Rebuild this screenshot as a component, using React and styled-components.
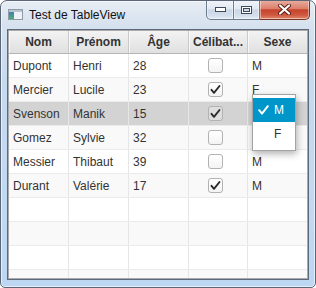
import React from 'react';
import styled, { createGlobalStyle } from 'styled-components';

const Global = createGlobalStyle`
  html, body { margin: 0; padding: 0; background: #ffffff; }
  body { font-family: "Liberation Sans", Arial, sans-serif; }
`;

const Window = styled.div`
  position: relative;
  box-sizing: border-box;
  width: 316px;
  height: 288px;
  border: 1px solid #5b6778;
  border-radius: 7px 7px 5px 5px;
  background: linear-gradient(to bottom, #e7edf4 0px, #d5e1ee 26px, #c6daf0 80px, #bdd7f3 100%);
  box-shadow: inset 0 0 0 1px rgba(255, 255, 255, 0.6);
  display: flex;
  flex-direction: column;
  overflow: hidden;
`;

const TitleBar = styled.div`
  height: 28px;
  flex: none;
  display: flex;
  align-items: flex-start;
  padding-left: 7px;
  padding-right: 5px;
`;

const AppIcon = styled.svg`
  margin-top: 8px;
  flex: none;
`;

const Title = styled.div`
  margin-top: 6px;
  margin-left: 6px;
  font-size: 12px;
  line-height: 16px;
  color: #111;
`;

const Controls = styled.div`
  margin-left: auto;
  margin-top: -1px;
  display: flex;
  height: 20px;
`;

const CtrlBtn = styled.div`
  box-sizing: border-box;
  width: ${(p) => p.$w}px;
  height: 20px;
  display: flex;
  align-items: center;
  justify-content: center;
  border: 1px solid ${(p) => (p.$close ? '#7d3326' : '#6c7b8e')};
  border-top: none;
  border-left: ${(p) => (p.$first ? '1px solid #6c7b8e' : 'none')};
  border-radius: ${(p) => (p.$first ? '0 0 0 5px' : p.$close ? '0 0 5px 0' : '0')};
  background: ${(p) =>
    p.$close
      ? 'linear-gradient(to bottom, #eab0a2 0%, #dc806b 45%, #c5432b 52%, #cf5a40 80%, #e08a6f 100%)'
      : 'linear-gradient(to bottom, #f1f5fa 0%, #e2e9f2 45%, #cad7e6 52%, #d3deeb 80%, #e2ebf5 100%)'};
  box-shadow: inset 0 0 0 1px rgba(255, 255, 255, 0.45);
`;

const Client = styled.div`
  flex: 1;
  margin: 0 6px 7px 6px;
  border: 1px solid #5d6a7b;
  background: #ffffff;
  display: flex;
  flex-direction: column;
  min-height: 0;
`;

const Table = styled.div`
  flex: 1;
  border: 1px solid #a9a9a9;
  display: flex;
  flex-direction: column;
  overflow: hidden;
  min-height: 0;
`;

const COLS = '60px 60px 60px 59px 59px';

const HeaderRow = styled.div`
  display: grid;
  grid-template-columns: ${COLS};
  height: 23px;
  box-sizing: border-box;
  border-bottom: 1px solid #b5b5b5;
  background: linear-gradient(to bottom, #f3f3f3 0%, #e9e9e9 50%, #e0e0e0 100%);
`;

const HeaderCell = styled.div`
  box-sizing: border-box;
  border-right: ${(p) => (p.$last ? 'none' : '1px solid #c9c9c9')};
  box-shadow: inset 1px 0 0 rgba(255, 255, 255, 0.7);
  display: flex;
  align-items: center;
  justify-content: center;
  font-size: 12px;
  font-weight: bold;
  color: #333;
  white-space: nowrap;
  overflow: hidden;
`;

const Body = styled.div`
  flex: 1;
  overflow: hidden;
`;

const Row = styled.div`
  display: grid;
  grid-template-columns: ${COLS};
  height: 24px;
  box-sizing: border-box;
  border-bottom: 1px solid #ebebeb;
  background: ${(p) => (p.$selected ? '#d3d3d3' : p.$odd ? '#f9f9f9' : '#ffffff')};
`;

const Cell = styled.div`
  box-sizing: border-box;
  border-right: ${(p) => (p.$last ? 'none' : '1px solid #e6e6e6')};
  display: flex;
  align-items: center;
  justify-content: ${(p) => (p.$center ? 'center' : 'flex-start')};
  padding: ${(p) => (p.$center ? '0 5px 0 0' : '0 3px 0 4px')};
  font-size: 12px;
  color: #333;
  white-space: nowrap;
  overflow: hidden;
`;

const Box = styled.span`
  box-sizing: border-box;
  width: 15px;
  height: 15px;
  border: 1px solid #b2b2b2;
  border-radius: 3px;
  background: ${(p) =>
    p.$dim ? 'rgba(255,255,255,0.25)' : 'linear-gradient(to bottom, #ffffff 0%, #f3f3f3 100%)'};
  display: flex;
  align-items: center;
  justify-content: center;
`;

const Popup = styled.div`
  position: absolute;
  left: 251px;
  top: 93px;
  width: 44px;
  box-sizing: border-box;
  border: 1px solid #a3a3a3;
  background: #ffffff;
  padding: 3px 0 4px 0;
  box-shadow: 1px 3px 7px rgba(0, 0, 0, 0.3);
`;

const MenuItem = styled.div`
  height: 24px;
  display: flex;
  align-items: center;
  padding-left: 5px;
  font-size: 12px;
  background: ${(p) => (p.$active ? '#0096c9' : 'transparent')};
  color: ${(p) => (p.$active ? '#ffffff' : '#333')};
`;

const CheckSlot = styled.span`
  width: 16px;
  display: flex;
  align-items: center;
`;

const CheckMark = () => (
  <svg width="13" height="13" viewBox="0 0 13 13">
    <path d="M2.5 6.8 L5 9.8 L10.5 3" fill="none" stroke="#2b2b2b" strokeWidth="1.9" strokeLinecap="round" strokeLinejoin="round" />
  </svg>
);

const CheckBox = ({ checked, dim }) => (
  <Box $dim={dim}>{checked && <CheckMark />}</Box>
);

const data = [
  { nom: 'Dupont', prenom: 'Henri', age: 28, celib: false, sexe: 'M' },
  { nom: 'Mercier', prenom: 'Lucile', age: 23, celib: true, sexe: 'F' },
  { nom: 'Svenson', prenom: 'Manik', age: 15, celib: true, sexe: 'M', selected: true },
  { nom: 'Gomez', prenom: 'Sylvie', age: 32, celib: false, sexe: 'F' },
  { nom: 'Messier', prenom: 'Thibaut', age: 39, celib: false, sexe: 'M' },
  { nom: 'Durant', prenom: 'Valérie', age: 17, celib: true, sexe: 'M' },
];

const headers = ['Nom', 'Prénom', 'Âge', 'Célibat...', 'Sexe'];

export default function App() {
  const empty = [6, 7, 8, 9];
  return (
    <>
      <Global />
      <Window>
        <TitleBar>
          <AppIcon width="15" height="11" viewBox="0 0 15 11">
            <defs>
              <linearGradient id="ig" x1="0" y1="0" x2="0" y2="1">
                <stop offset="0" stopColor="#3f7fb8" />
                <stop offset="1" stopColor="#4fae6e" />
              </linearGradient>
            </defs>
            <rect x="0.5" y="0.5" width="14" height="10" fill="#eef2f6" stroke="#8d9aa8" />
            <rect x="1" y="1" width="13" height="2" fill="#b9c4cf" />
            <rect x="1" y="3" width="5" height="7" fill="url(#ig)" />
          </AppIcon>
          <Title>Test de TableView</Title>
          <Controls>
            <CtrlBtn $w={28} $first>
              <svg width="11" height="5" viewBox="0 0 11 5">
                <rect x="0.5" y="0.5" width="10" height="4" fill="#ffffff" stroke="#3d4a5c" />
              </svg>
            </CtrlBtn>
            <CtrlBtn $w={26}>
              <svg width="11" height="8" viewBox="0 0 11 8">
                <rect x="0.5" y="0.5" width="10" height="7" fill="none" stroke="#3d4a5c" />
                <rect x="1.5" y="1.5" width="8" height="5" fill="none" stroke="#ffffff" />
                <rect x="2.5" y="2.5" width="6" height="3" fill="none" stroke="#3d4a5c" />
              </svg>
            </CtrlBtn>
            <CtrlBtn $w={50} $close>
              <svg width="13" height="11" viewBox="0 0 13 11">
                <path d="M2 1.5 L11 9.5 M11 1.5 L2 9.5" stroke="#5a1c12" strokeWidth="4" strokeLinecap="round" />
                <path d="M2 1.5 L11 9.5 M11 1.5 L2 9.5" stroke="#ffffff" strokeWidth="2.2" strokeLinecap="round" />
              </svg>
            </CtrlBtn>
          </Controls>
        </TitleBar>
        <Client>
          <Table>
            <HeaderRow>
              {headers.map((h, i) => (
                <HeaderCell key={h} $last={i === headers.length - 1}>{h}</HeaderCell>
              ))}
            </HeaderRow>
            <Body>
              {data.map((r, i) => (
                <Row key={r.nom} $odd={i % 2 === 1} $selected={r.selected}>
                  <Cell>{r.nom}</Cell>
                  <Cell>{r.prenom}</Cell>
                  <Cell>{r.age}</Cell>
                  <Cell $center>
                    <CheckBox checked={r.celib} dim={r.selected} />
                  </Cell>
                  <Cell $last>{r.sexe}</Cell>
                </Row>
              ))}
              {empty.map((i) => (
                <Row key={i} $odd={i % 2 === 1}>
                  <Cell />
                  <Cell />
                  <Cell />
                  <Cell />
                  <Cell $last />
                </Row>
              ))}
            </Body>
          </Table>
        </Client>
        <Popup>
          <MenuItem $active>
            <CheckSlot>
              <svg width="11" height="10" viewBox="0 0 11 10">
                <path d="M1.2 5.2 L4 8.6 L9.8 1.2" fill="none" stroke="#ffffff" strokeWidth="2" strokeLinecap="round" strokeLinejoin="round" />
              </svg>
            </CheckSlot>
            M
          </MenuItem>
          <MenuItem>
            <CheckSlot />
            F
          </MenuItem>
        </Popup>
      </Window>
    </>
  );
}
